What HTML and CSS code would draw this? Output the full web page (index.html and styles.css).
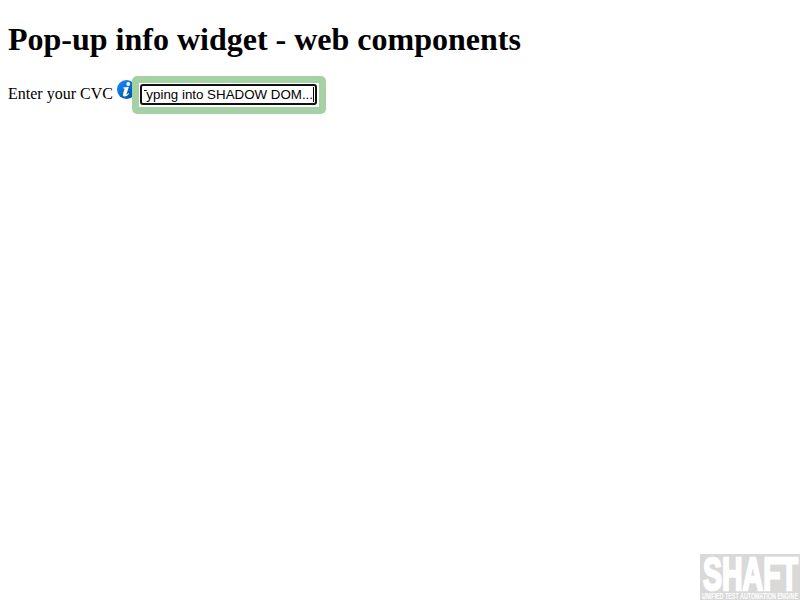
FILE: index.html
```html
<!DOCTYPE html>
<html lang="en">
<head>
<meta charset="utf-8">
<title>Pop-up info widget</title>
<link rel="stylesheet" href="styles.css">
</head>
<body>
<h1>Pop-up info widget - web components</h1>
<form class="row">
  <label class="label">Enter your CVC</label>
  <svg class="info" viewBox="0 0 20 20">
    <defs><linearGradient id="g" x1="0" y1="0" x2="1" y2="1"><stop offset="0.1" stop-color="#1687ff"/><stop offset="0.9" stop-color="#004f9f"/></linearGradient></defs>
    <circle cx="10" cy="10" r="10" fill="url(#g)"/>
    <circle cx="11.8" cy="4.2" r="2" fill="#fff"/>
    <path d="M6.6 7.9 12.4 7.1 10.2 14.4Q9.9 15.7 10.8 15.1L12 13.8 12.7 14.4Q10.4 17.6 7.9 17.4 5.7 17.1 6.4 14.5L7.9 9.6Q8.2 8.8 6.4 8.8Z" fill="#fff"/>
  </svg>
  <div class="highlight"><div class="field"><span class="value">Typing into SHADOW DOM...</span></div></div>
</form>
<svg class="logo" viewBox="0 0 100 46">
  <rect width="100" height="46" fill="#d9d9d9"/>
  <text class="name" x="3" y="36" textLength="95" lengthAdjust="spacingAndGlyphs">SHAFT</text>
  <text class="tagline" x="2" y="45.2" textLength="96" lengthAdjust="spacingAndGlyphs">UNIFIED TEST AUTOMATION ENGINE</text>
</svg>
</body>
</html>
```
FILE: styles.css
```css
body {
  display: flow-root;
  margin: 8px;
  background: #fff;
  color: #000;
  font-family: "Liberation Serif", serif;
  font-size: 16px;
}

h1 {
  margin: 13px 0 18px;
  font-size: 32px;
  line-height: 37px;
}

.row {
  display: flex;
  align-items: flex-start;
  height: 38px;
}

.label {
  margin-top: 9px;
  line-height: 18px;
  width: 109px;
  white-space: nowrap;
}

.info {
  flex: none;
  width: 19px;
  height: 19px;
  margin-top: 4px;
  margin-right: -4px;
}

.highlight {
  position: relative;
  box-sizing: border-box;
  width: 194px;
  height: 38px;
  padding: 1px;
  border: 7px solid #a5d1a5;
  border-radius: 5px;
  background: #fff;
}

.field {
  display: flex;
  justify-content: flex-end;
  box-sizing: border-box;
  width: 177px;
  height: 21px;
  border: 2px solid #101010;
  border-radius: 3px;
  padding: 0 1px 0 2px;
  overflow: clip;
  overflow-clip-margin: content-box;
  font: 13.333px/17px "Liberation Sans", Arial, sans-serif;
}

.value {
  flex: none;
  white-space: nowrap;
  border-right: 1px solid #000;
  height: 15px;
  line-height: 15px;
  margin-top: 1px;
}

.logo {
  position: fixed;
  right: 0;
  bottom: 0;
  width: 100px;
  height: 46px;
}

.name {
  font: bold 46px "Liberation Sans", sans-serif;
  fill: #fff;
  stroke: #fff;
  stroke-width: 2.5px;
}

.tagline {
  font: bold 9.5px "Liberation Sans", sans-serif;
  fill: #fff;
}
```
